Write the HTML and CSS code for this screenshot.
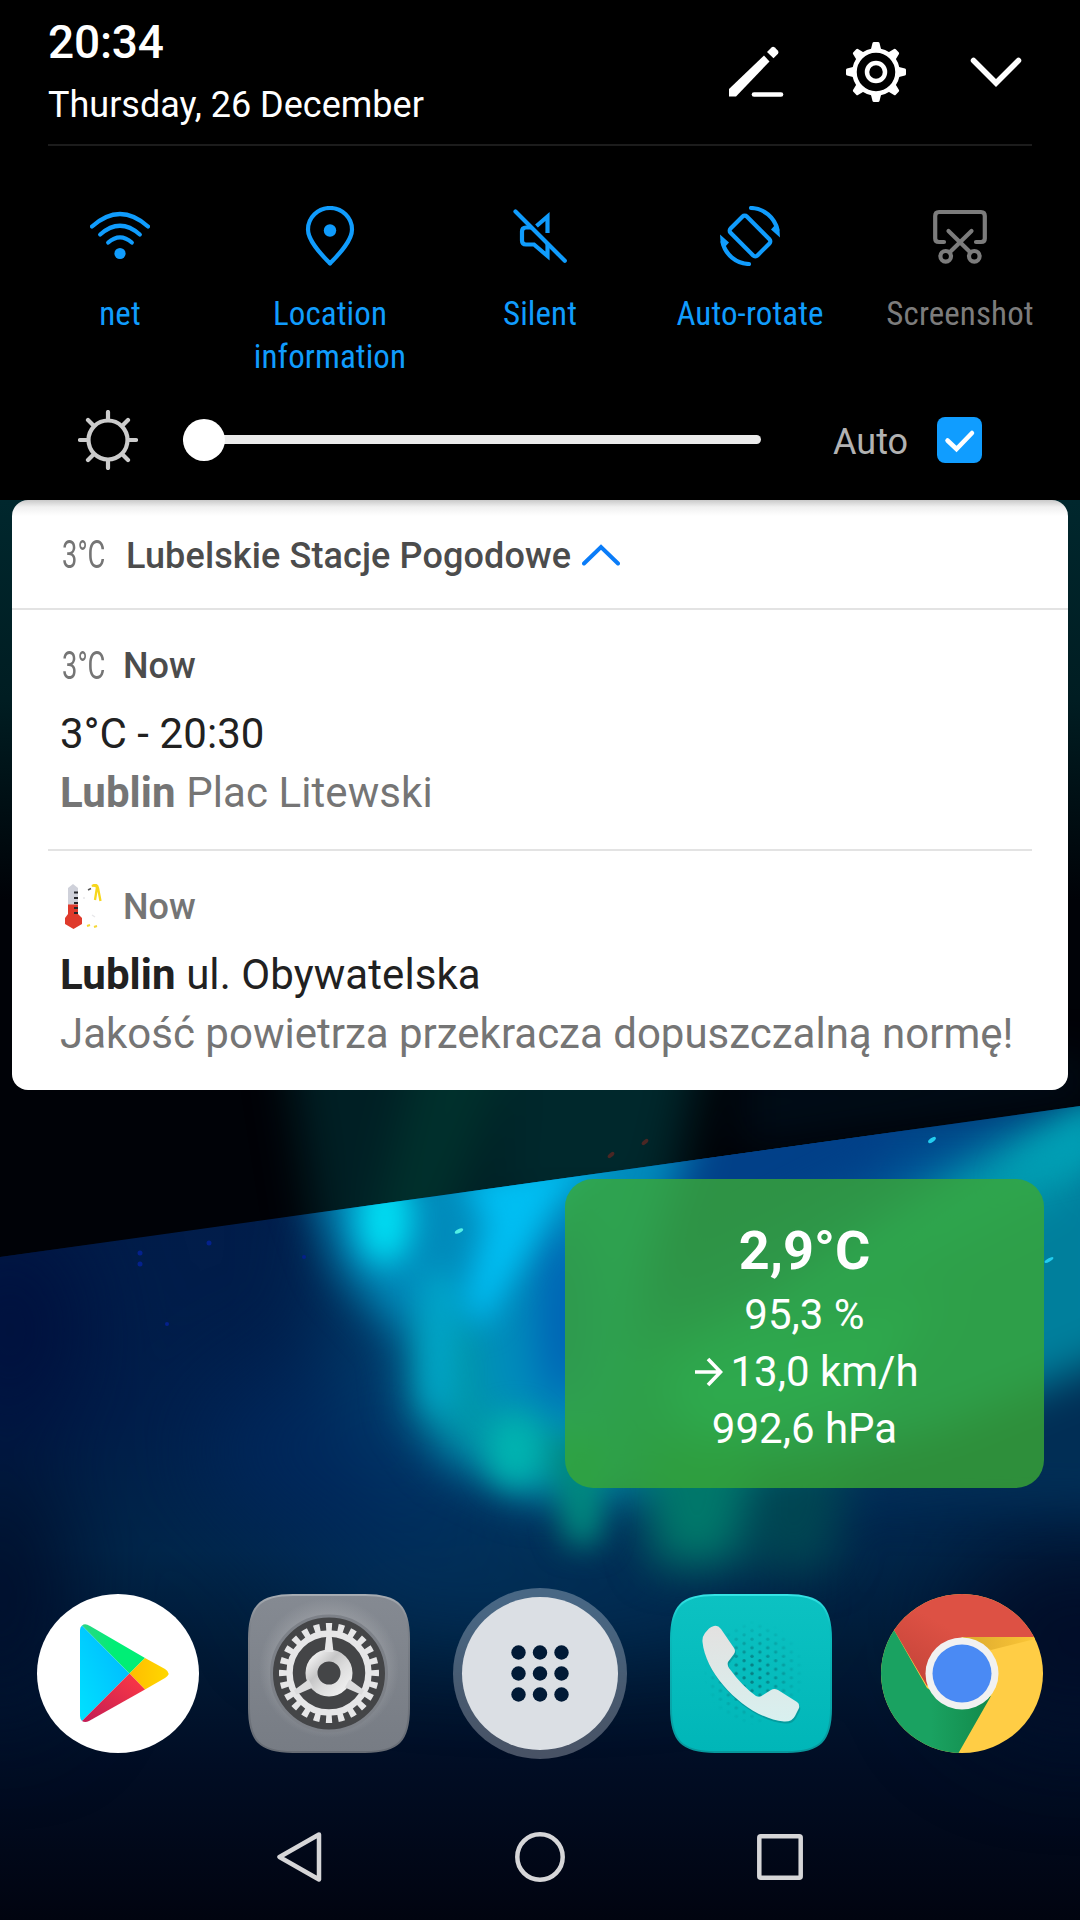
FILE: index.html
```html
<!DOCTYPE html>
<html lang="en">
<head>
<meta charset="utf-8">
<title>Notifications</title>
<link rel="stylesheet" href="styles.css">
</head>
<body>
<div class="screen">
  <svg class="wallpaper" viewBox="0 0 1080 1920" aria-hidden="true">
    <defs>
      <clipPath id="lit"><path d="M0 1257L1080 1106V1920H0z"/></clipPath>
      <filter id="b12" x="-80%" y="-80%" width="260%" height="260%" color-interpolation-filters="sRGB"><feGaussianBlur stdDeviation="15"/></filter>
      <filter id="b22" x="-60%" y="-60%" width="220%" height="220%" color-interpolation-filters="sRGB"><feGaussianBlur stdDeviation="22"/></filter>
      <filter id="b45" x="-80%" y="-80%" width="260%" height="260%" color-interpolation-filters="sRGB"><feGaussianBlur stdDeviation="50"/></filter>
      <linearGradient id="night" x1="0" y1="1150" x2="0" y2="1920" gradientUnits="userSpaceOnUse">
        <stop offset="0" stop-color="#011c4a"/><stop offset=".35" stop-color="#011e4a"/><stop offset=".52" stop-color="#00264a"/>
        <stop offset=".65" stop-color="#011a36"/><stop offset=".8" stop-color="#010d24"/><stop offset="1" stop-color="#010410"/>
      </linearGradient>
      <linearGradient id="side" x1="0" y1="500" x2="0" y2="900" gradientUnits="userSpaceOnUse">
        <stop offset="0" stop-color="#00272d"/><stop offset=".5" stop-color="#001d22"/><stop offset="1" stop-color="#000207"/>
      </linearGradient>
    </defs>
    <rect width="1080" height="1920" fill="#000207"/>
    <rect y="500" width="1080" height="400" fill="url(#side)"/>
    <g filter="url(#b22)">
      <path d="M285 1040H710L670 1230L320 1260z" fill="#001f24"/>
      <path d="M420 1040H520L440 1240H370z" fill="#00302c"/>
      <path d="M520 1040H690L650 1200H500z" fill="#00282c"/>
      <path d="M740 1060H1090V1100L740 1150z" fill="#000c17"/>
    </g>
    <g fill="#4a2724"><ellipse cx="645" cy="1142" rx="2" ry="4" transform="rotate(50 645 1142)"/><ellipse cx="611" cy="1155" rx="2" ry="4" transform="rotate(50 611 1155)"/></g>
    <g clip-path="url(#lit)">
      <rect y="1100" width="1080" height="820" fill="url(#night)"/>
      <g filter="url(#b45)">
        <ellipse cx="10" cy="1330" rx="70" ry="110" fill="#000f3c"/>
        <ellipse cx="360" cy="1450" rx="160" ry="90" fill="#00285c"/>
        <path d="M340 1200L420 1200L440 1420L560 1520L400 1470L350 1350z" fill="#004a78"/>
        <path d="M670 1090H1120V1350L960 1420L700 1480L540 1480L500 1250z" fill="#005297"/>
        <ellipse cx="0" cy="1590" rx="70" ry="130" fill="#000e2b"/>
        <ellipse cx="1080" cy="1640" rx="130" ry="100" fill="#010d28"/>
        <ellipse cx="540" cy="1590" rx="250" ry="50" fill="#01315a"/>
      </g>
      <g filter="url(#b22)">
        <path d="M305 1170L700 1110L650 1260L600 1490L530 1500L445 1460L410 1410L405 1340L340 1270z" fill="#008cbc"/>
        <path d="M1130 1180V1350L980 1420L700 1480L600 1500L600 1420L650 1330L760 1300L1000 1180z" fill="#007f9c"/>
        <path d="M1120 1080V1160L1000 1220L840 1300L700 1390L660 1370L880 1220L990 1150z" fill="#009cb0"/>
        <path d="M660 1380L940 1290L860 1400L700 1450z" fill="#00b0ae"/>
        <path d="M700 1110L930 1080L880 1170L760 1230L640 1290z" fill="#014088"/>
        <ellipse cx="565" cy="1315" rx="26" ry="92" fill="#005eb4"/>
        <path d="M1130 1350L960 1420L780 1500L1130 1510z" fill="#012e55"/>
        <path d="M425 1310L475 1320L485 1410L580 1430V1475L530 1495L465 1455L420 1410z" fill="#0098a8"/>
        <path d="M640 1440H760L735 1565H655z" fill="#00786a"/>
        <path d="M760 1460H850L830 1570H750z" fill="#004652"/>
      </g>
      <g filter="url(#b12)">
        <ellipse cx="385" cy="1218" rx="27" ry="46" fill="#00dcf2"/>
        <path d="M460 1180L620 1150L565 1190L530 1250L480 1330L465 1300L485 1220z" fill="#00bef2"/>
        <path d="M425 1270L455 1280L450 1420L425 1400z" fill="#00a8cc"/>
        <ellipse cx="515" cy="1450" rx="27" ry="36" fill="#00b4b0"/>
        <path d="M548 1440H608L600 1545H566z" fill="#00897e"/>
        <path d="M1100 1110L1020 1160L1000 1180L1090 1160z" fill="#00a0b6"/>
      </g>
      <g fill="#23cdf0">
        <ellipse cx="459" cy="1231" rx="2" ry="4.500" transform="rotate(65 459 1231)" fill="#52f0e4"/>
        <ellipse cx="932" cy="1140" rx="2" ry="4.500" transform="rotate(55 932 1140)"/>
        <ellipse cx="1049" cy="1260" rx="1.600" ry="5" transform="rotate(60 1049 1260)"/>
        <g fill="#04218c"><circle cx="209" cy="1243" r="2.500"/><circle cx="140" cy="1253" r="2.500"/><circle cx="140" cy="1264" r="2.500"/><circle cx="304" cy="1257" r="2"/><circle cx="167" cy="1324" r="2"/></g>
      </g>
    </g>
  </svg>

  <section class="panel">
    <header class="top">
      <div class="clock">
        <div class="time">20:34</div>
        <div class="date">Thursday, 26 December</div>
      </div>
      <div class="actions">
        <svg width="60" height="60" viewBox="-30 -30 60 60"><path d="M-27 24V17L8 -16.500L13.500 -10.500L-20 24.500H-27z" fill="#fff"/><path d="M11 -20L15.500 -24.500Q17 -26 18.800 -24.500L22 -21.200Q23 -19.700 22 -18.200L17.500 -13.700z" fill="#fff"/><path d="M-2 22.500H25" stroke="#fff" stroke-width="4.600" stroke-linecap="round"/></svg>
        <svg width="60" height="60" viewBox="-30 -30 60 60"><g fill="none" stroke="#fff"><circle r="21.500" stroke-width="4.500"/><circle r="9" stroke-width="4.500"/></g><g fill="#fff"><path id="tooth" d="M-5.500 -21L-3.500 -29Q-3.200 -30 -2 -30H2Q3.200 -30 3.500 -29L5.500 -21z"/><use href="#tooth" transform="rotate(45)"/><use href="#tooth" transform="rotate(90)"/><use href="#tooth" transform="rotate(135)"/><use href="#tooth" transform="rotate(180)"/><use href="#tooth" transform="rotate(225)"/><use href="#tooth" transform="rotate(270)"/><use href="#tooth" transform="rotate(315)"/></g></svg>
        <svg width="60" height="60" viewBox="-30 -30 60 60"><path d="M-22.500 -11.500L0 11L22.500 -11.500" fill="none" stroke="#fff" stroke-width="5.500" stroke-linecap="round"/></svg>
      </div>
    </header>

    <div class="tiles">
      <div class="tile">
        <svg class="tile-icon" viewBox="-30 -30 60 60"><g fill="none" stroke="currentColor" stroke-width="4.200" stroke-linecap="round"><path d="M-28 -9.500Q0 -34.500 28 -9.500"/><path d="M-19.800 -1.500Q0 -19 19.800 -1.500"/><path d="M-11.800 6.500Q0 -3.800 11.800 6.500"/></g><circle cy="17.500" r="5.600" fill="currentColor"/></svg>
        <span class="label">net</span>
      </div>
      <div class="tile">
        <svg class="tile-icon" viewBox="-30 -30 60 60"><path d="M0 27.500C-6 21 -22 6 -22 -6.500A22 21.500 0 0 1 22 -6.500C22 6 6 21 0 27.500z" fill="none" stroke="currentColor" stroke-width="4.200" stroke-linejoin="round"/><circle cy="-5.500" r="6.200" fill="currentColor"/></svg>
        <span class="label">Location<br>information</span>
      </div>
      <div class="tile">
        <svg class="tile-icon" viewBox="-30 -30 60 60"><g fill="none" stroke="currentColor" stroke-width="4.200"><path d="M-24.500 -24.500L24.800 24.800" stroke-linecap="round"/><path d="M-9 -8.500H-14Q-18 -8.500 -18 -4.500V4.500Q-18 8.500 -14 8.500H-6L7.500 20V8"/><path d="M-3.500 -10L7.500 -19.500V-3"/></g></svg>
        <span class="label">Silent</span>
      </div>
      <div class="tile">
        <svg class="tile-icon" viewBox="-30 -30 60 60"><g fill="none" stroke="currentColor" stroke-width="4.200"><rect x="-11.500" y="-19" width="23" height="38" rx="3" transform="rotate(-45)"/><path id="arc" d="M1 -28A28 28 0 0 1 27.500 -6" stroke-linecap="round"/><use href="#arc" transform="rotate(180)"/></g><path id="head" d="M30 1.500L21 -6.500L26 -12L28.500 -9Q30 -4 30 1.500z" fill="currentColor"/><use href="#head" transform="rotate(180)"/></svg>
        <span class="label">Auto-rotate</span>
      </div>
      <div class="tile off">
        <svg class="tile-icon" viewBox="-30 -30 60 60"><g fill="none" stroke="currentColor" stroke-width="4.200" stroke-linecap="round"><path d="M-16 6H-21Q-24.800 6 -24.800 2.500V-20Q-24.800 -24 -21 -24H21Q24.800 -24 24.800 -20V2.500Q24.800 6 21 6H16"/><path d="M-11.500 -5L10.500 16.500M11.500 -5L-10.500 16.500"/><circle cx="-14.300" cy="20.300" r="5.300"/><circle cx="14.300" cy="20.300" r="5.300"/></g></svg>
        <span class="label">Screenshot</span>
      </div>
    </div>

    <div class="brightness">
      <svg class="sun" width="60" height="60" viewBox="-30 -30 60 60"><g fill="none" stroke="#ccc" stroke-width="4.200" stroke-linecap="round"><circle r="19.500"/><path d="M0 -28V-21M0 28V21M-28 0H-21M28 0H21M-20 -20L-15 -15M20 -20L15 -15M-20 20L-15 15M20 20L15 15"/></g></svg>
      <div class="slider"><span class="track"></span><span class="thumb"></span></div>
      <span class="auto">Auto</span>
      <span class="check"><svg width="45" height="46" viewBox="0 0 45 46"><path d="M10.500 23.500L19.500 32L35 16" fill="none" stroke="#fff" stroke-width="4.500" stroke-linecap="round"/></svg></span>
    </div>
  </section>

  <main class="card">
    <div class="group-head">
      <span class="mini-temp"><span class="squeeze">3°C</span></span>
      <span class="app-name">Lubelskie Stacje Pogodowe</span>
      <svg width="38" height="22" viewBox="0 0 38 22"><path d="M2 19.500L19 3L36 19.500" fill="none" stroke="#0a7cf8" stroke-width="4" stroke-linecap="round"/></svg>
    </div>
    <article class="note">
      <div class="note-head"><span class="mini-temp"><span class="squeeze">3°C</span></span><span class="when">Now</span></div>
      <div class="note-title">3°C - 20:30</div>
      <div class="note-text"><b>Lublin</b> Plac Litewski</div>
    </article>
    <article class="note second">
      <div class="note-head">
        <span class="thermo"><svg width="38" height="46" viewBox="0 0 38 46"><path d="M3 4L8 0L13 4V24H3z" fill="#cfd1da"/><path d="M3 20.500H13V30L17 34V40L8.500 45L0 40V34L3 30z" fill="#df3a2c"/><path d="M9 8.500H13M9 14H13M9 19H13M9 24H13M9 29H13" stroke="#25262a" stroke-width="1.800"/><path d="M26 2L32 1L33 4z" fill="#f7d71c"/><path d="M27 2Q32 -1 33 4L35.500 17M32 3L30 16" fill="none" stroke="#f7d71c" stroke-width="2.300"/><path d="M23 6L26 4.500" stroke="#555" stroke-width="1.500"/><path d="M18 14L20 14M27 31L30 33" stroke="#e8e8ea" stroke-width="1.500"/><path d="M22 42L25 41M29 43L32 42" stroke="#f5d838" stroke-width="2"/></svg></span>
        <span class="when">Now</span>
      </div>
      <div class="note-title"><b>Lublin</b> ul. Obywatelska</div>
      <div class="note-text long">Jakość powietrza przekracza dopuszczalną normę!</div>
    </article>
  </main>

  <section class="widget">
    <div class="w-temp">2,9°C</div>
    <div class="w-row">95,3 %</div>
    <div class="w-row wind"><svg width="28" height="30" viewBox="0 0 28 30"><path d="M0 15H25M13 2L25.500 15L13 28" fill="none" stroke="#fff" stroke-width="3.600"/></svg><span>13,0 km/h</span></div>
    <div class="w-row">992,6 hPa</div>
  </section>

  <nav class="dock">
    <svg class="app" viewBox="0 0 162 159">
      <defs><linearGradient id="pb" x1="1" y1="0" x2="0" y2="1"><stop offset="0" stop-color="#00b4ff"/><stop offset="1" stop-color="#00e2ff"/></linearGradient><linearGradient id="pg"><stop offset="0" stop-color="#2cd584"/><stop offset=".5" stop-color="#00ee76"/></linearGradient><linearGradient id="py"><stop offset="0" stop-color="#ffbc00"/><stop offset="1" stop-color="#ffd800"/></linearGradient><linearGradient id="pr" x1="1" y1="0" x2="0" y2="1"><stop offset="0" stop-color="#ff3a44"/><stop offset="1" stop-color="#c21c55"/></linearGradient></defs>
      <ellipse cx="81" cy="79.500" rx="81" ry="79.500" fill="#fff"/>
      <path d="M45 31.500L92.500 79.500L45 127Q43 125.500 43 122V36Q43 33 45 31.500z" fill="url(#pb)"/>
      <path d="M45 31.500Q48 29 53 32L108 64L92.500 79.500z" fill="url(#pg)"/>
      <path d="M108 64L128 75Q135 79.500 128 84L108 95.500L92.500 79.500z" fill="url(#py)"/>
      <path d="M92.500 79.500L108 95.500L52 127Q48 129 45 127z" fill="url(#pr)"/>
    </svg>
    <svg class="app" viewBox="0 0 162 159">
      <defs><linearGradient id="sg" x1="0" y1="0" x2="0" y2="1"><stop offset="0" stop-color="#858a92"/><stop offset="1" stop-color="#777c84"/></linearGradient><radialGradient id="sh"><stop offset=".75" stop-color="#a2a5aa"/><stop offset="1" stop-color="#a2a5aa" stop-opacity="0"/></radialGradient><linearGradient id="metal" x1="0" y1="0" x2="1" y2="1"><stop offset="0" stop-color="#f2f2f2"/><stop offset=".35" stop-color="#c6c6c7"/><stop offset=".6" stop-color="#dcdcdc"/><stop offset="1" stop-color="#f0f0f0"/></linearGradient><linearGradient id="srim" x1="0" y1="0" x2="0" y2="1"><stop offset="0" stop-color="#a7acb2"/><stop offset=".2" stop-color="#7c8189"/><stop offset="1" stop-color="#676c74"/></linearGradient></defs>
      <path d="M1 45C1 12 12 1 45 1H117C150 1 161 12 161 45V114C161 147 150 158 117 158H45C12 158 1 147 1 114z" fill="url(#sg)" stroke="url(#srim)" stroke-width="2"/>
      <circle cx="81" cy="74" r="70" fill="url(#sh)" opacity=".55"/>
      <circle cx="81" cy="79.500" r="57.500" fill="#444547" stroke="#7d8188" stroke-width="3"/>
      <g transform="translate(81 79)" fill="none" stroke="#e6e6e7">
        <circle r="45" stroke-width="10" pathLength="24" stroke-dasharray=".5 .5" stroke-dashoffset=".25"/>
        <circle r="39.500" stroke-width="6.500"/>
        <circle r="17.500" stroke-width="12" stroke="url(#metal)"/>
        <path d="M-2.500 -39H2.500L4.500 -21H-4.500z" fill="#e6e6e7" stroke="none"/>
        <path d="M-2.500 -39H2.500L4.500 -21H-4.500z" fill="#dcdcdd" stroke="none" transform="rotate(120)"/>
        <path d="M-2.500 -39H2.500L4.500 -21H-4.500z" fill="#dcdcdd" stroke="none" transform="rotate(240)"/>
      </g>
    </svg>
    <svg class="drawer" viewBox="0 0 174 171">
      <ellipse cx="87" cy="85.500" rx="87" ry="85.500" fill="#dbe1ea" fill-opacity=".33"/>
      <ellipse cx="87" cy="85.500" rx="78" ry="76.500" fill="#dbdfe4"/>
      <g fill="#011a36"><circle cx="65.500" cy="64.500" r="7.200"/><circle cx="87" cy="64.500" r="7.200"/><circle cx="108.500" cy="64.500" r="7.200"/><circle cx="65.500" cy="85.500" r="7.200"/><circle cx="87" cy="85.500" r="7.200"/><circle cx="108.500" cy="85.500" r="7.200"/><circle cx="65.500" cy="106.500" r="7.200"/><circle cx="87" cy="106.500" r="7.200"/><circle cx="108.500" cy="106.500" r="7.200"/></g>
    </svg>
    <svg class="app" viewBox="0 0 162 159">
      <defs><linearGradient id="tg" x1="0" y1="0" x2="0" y2="1"><stop offset="0" stop-color="#0cc2c2"/><stop offset="1" stop-color="#00b6b8"/></linearGradient><linearGradient id="trim" x1="0" y1="0" x2="0" y2="1"><stop offset="0" stop-color="#35e3e5"/><stop offset=".2" stop-color="#0abcbd"/><stop offset="1" stop-color="#08989d"/></linearGradient><pattern id="dots" width="15.800" height="8.600" patternUnits="userSpaceOnUse"><circle cx="3" cy="2.200" r="1.700" fill="#067f84"/><circle cx="10.900" cy="6.500" r="1.700" fill="#067f84"/></pattern><radialGradient id="fade"><stop offset=".2" stop-color="#fff"/><stop offset="1" stop-color="#000"/></radialGradient><mask id="dm"><ellipse cx="84" cy="79" rx="50" ry="52" fill="url(#fade)"/></mask><linearGradient id="hand" x1="0" y1="0" x2="0" y2="1"><stop offset="0" stop-color="#e3e1e0"/><stop offset="1" stop-color="#d8f0ef"/></linearGradient></defs>
      <path d="M1 45C1 12 12 1 45 1H117C150 1 161 12 161 45V114C161 147 150 158 117 158H45C12 158 1 147 1 114z" fill="url(#tg)" stroke="url(#trim)" stroke-width="2"/>
      <ellipse cx="84" cy="79" rx="50" ry="52" fill="url(#dots)" mask="url(#dm)"/>
      <path d="M44 32Q48 31 51 35L64 54Q66 57 64 60L58 68Q57 71 59 74Q72 92 86 102Q90 104 93 101L101 96Q104 94 108 96L127 108Q130 110 129 114L125 122Q122 128 114 127.500C80 125 36 84 32.500 48Q32 43 35 39L39 34.500Q41 32.500 44 32z" fill="#067a7e" opacity=".45" transform="translate(1 2)"/>
      <path d="M44 32Q48 31 51 35L64 54Q66 57 64 60L58 68Q57 71 59 74Q72 92 86 102Q90 104 93 101L101 96Q104 94 108 96L127 108Q130 110 129 114L125 122Q122 128 114 127.500C80 125 36 84 32.500 48Q32 43 35 39L39 34.500Q41 32.500 44 32z" fill="url(#hand)"/>
    </svg>
    <svg class="app" viewBox="0 0 162 159">
      <defs><clipPath id="cc"><ellipse cx="81" cy="79.500" rx="81" ry="79.500"/></clipPath><linearGradient id="cs" x1="0" y1="0" x2="1" y2="0"><stop offset="0" stop-color="#dba92e"/><stop offset="1" stop-color="#ffc938"/></linearGradient><linearGradient id="cr" x1="0" y1="1" x2="1" y2="0"><stop offset="0" stop-color="#bb3f35"/><stop offset=".5" stop-color="#dd5144"/></linearGradient><linearGradient id="cgd" x1="0" y1="0" x2="1" y2="0"><stop offset=".5" stop-color="#1aa261"/><stop offset="1" stop-color="#128a4b"/></linearGradient></defs>
      <g clip-path="url(#cc)">
        <rect width="162" height="159" fill="#ffcd45"/>
        <path d="M81 43H162L110 56z" fill="url(#cs)"/>
        <path d="M-10 -10H172V43H81L46 92L13.500 37z" fill="url(#cr)"/>
        <path d="M-10 30L13.500 37L46 94L81 115L110 102L77.500 159H-10z" fill="url(#cgd)"/>
      </g>
      <ellipse cx="81" cy="79.500" rx="36.500" ry="36" fill="#f1f1f1"/>
      <ellipse cx="81" cy="79.500" rx="29.500" ry="29" fill="#4a8af4"/>
    </svg>
  </nav>

  <nav class="navbar">
    <svg width="50" height="50" viewBox="0 0 50 50"><path d="M44 2.500L4.500 25L44 47.500z" fill="none" stroke="#d6d6d8" stroke-width="4.500" stroke-linejoin="round"/></svg>
    <svg width="50" height="50" viewBox="0 0 50 50"><circle cx="25" cy="25" r="22.700" fill="none" stroke="#d6d6d8" stroke-width="4.500"/></svg>
    <svg width="50" height="50" viewBox="0 0 50 50"><rect x="4.300" y="4.300" width="41.400" height="41.400" rx="1.500" fill="none" stroke="#d6d6d8" stroke-width="4.500"/></svg>
  </nav>
</div>
</body>
</html>
```
FILE: styles.css
```css
* { box-sizing: border-box; }
body { margin: 0; background: #000; font-family: Roboto, "Noto Sans", sans-serif; }
svg { display: block; flex: none; }
.screen { position: relative; width: 1080px; height: 1920px; overflow: hidden; display: flex; flex-direction: column; isolation: isolate; }
.wallpaper { position: absolute; inset: 0; width: 1080px; height: 1920px; z-index: -1; }

.panel { flex: none; height: 500px; background: #000; color: #fff; }
.top { height: 146px; margin: 0 48px; border-bottom: 2px solid #1c1c1c; display: flex; justify-content: space-between; padding-top: 17px; }
.time { font-size: 46px; line-height: 50px; font-weight: 500; letter-spacing: -.2px; }
.date { font-size: 36px; line-height: 50px; margin-top: 13px; white-space: nowrap; }
.actions { display: flex; gap: 60px; padding: 25px 6px 0 0; }

.tiles { display: grid; grid-template-columns: repeat(5, 210px); padding: 60px 15px 0; height: 264px; }
.tile { display: flex; flex-direction: column; align-items: center; color: #109cfd; }
.tile.off { color: #7c7c7c; }
.tile-icon { width: 60px; height: 60px; }
.label { margin-top: 26px; font-family: "Roboto Condensed", Roboto, sans-serif; font-stretch: 75%; font-size: 33px; line-height: 43px; letter-spacing: .1px; text-align: center; white-space: nowrap; }

.brightness { display: flex; align-items: center; height: 60px; padding-left: 78px; }
.slider { position: relative; width: 578px; height: 42px; margin-left: 45px; display: flex; align-items: center; }
.track { width: 100%; height: 9px; margin-top: -1px; border-radius: 5px; background: #ebebeb; }
.thumb { position: absolute; left: 0; top: 0; width: 42px; height: 42px; border-radius: 50%; background: #fff; }
.auto { margin-left: 72px; width: 104px; font-size: 36px; line-height: 46px; padding-top: 4px; color: #b2b2b2; }
.check { width: 45px; height: 46px; border-radius: 8px; background: #109dff; }

.card { flex: none; height: 590px; margin: 0 12px; border-radius: 16px; background: linear-gradient(#c9c9c9, #f0f0f0 7px, #fff 16px); overflow: hidden; }
.group-head { height: 110px; border-bottom: 2px solid #e3e3e3; display: flex; align-items: center; padding: 2px 0 0 50px; }
.mini-temp { width: 64px; font-size: 38px; line-height: 38px; color: #757575; }
.squeeze { display: inline-block; transform: scaleX(.72); transform-origin: 0 50%; white-space: nowrap; }
.app-name { font-size: 36px; line-height: 42px; font-weight: 500; color: #4c4c4c; letter-spacing: .12px; margin-right: 11px; padding-top: 1px; }
.note { height: 241px; margin: 0 36px; padding: 34px 0 0 12px; border-bottom: 2px solid #e3e3e3; }
.note.second { height: 239px; border-bottom: 0; }
.note-head { display: flex; align-items: center; height: 44px; }
.note-head .mini-temp, .thermo { width: 63px; padding-left: 2px; }
.thermo { padding-left: 5px; }
.when { font-size: 36px; line-height: 44px; font-weight: 500; color: #4c4c4c; }
.second .when { color: #757575; }
.note-title { margin-top: 17px; font-size: 42px; line-height: 58px; color: #212121; letter-spacing: .08px; white-space: nowrap; }
.note-text { margin-top: 1px; font-size: 42px; line-height: 58px; color: #757575; letter-spacing: .08px; white-space: nowrap; }
.note-text.long { letter-spacing: 0; }

.widget { flex: none; width: 479px; height: 309px; margin: 89px 0 0 565px; padding-top: 40px; border-radius: 28px; background: rgba(57, 168, 52, .8); color: #fff; text-align: center; }
.w-temp { font-size: 54px; line-height: 64px; font-weight: 700; }
.w-row { font-size: 42px; line-height: 57px; }
.w-temp + .w-row { margin-top: 3px; }
.wind { display: flex; justify-content: center; align-items: center; gap: 7px; padding-left: 5px; }

.dock { flex: none; display: flex; justify-content: space-between; align-items: center; height: 171px; margin-top: 100px; padding: 0 37px; }
.app { width: 162px; height: 159px; }
.drawer { width: 174px; height: 171px; margin: 0 -6px; }
.navbar { flex: none; display: flex; justify-content: center; gap: 190px; margin-top: 73px; }
```
